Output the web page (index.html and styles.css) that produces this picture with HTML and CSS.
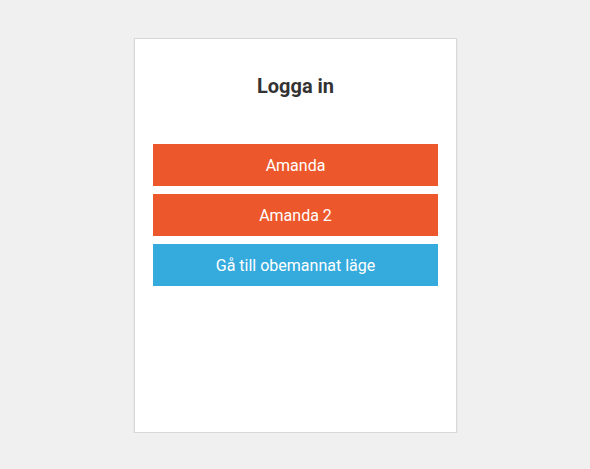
FILE: index.html
```html
<!DOCTYPE html>
<html lang="sv">
<head>
<meta charset="utf-8">
<title>Logga in</title>
<link rel="stylesheet" href="styles.css">
</head>
<body>
<main class="page">
  <section class="card">
    <h1 class="title">Logga in</h1>
    <div class="buttons">
      <button class="btn btn-user">Amanda</button>
      <button class="btn btn-user">Amanda 2</button>
      <button class="btn btn-unmanned">Gå till obemannat läge</button>
    </div>
  </section>
</main>
</body>
</html>
```
FILE: styles.css
```css
html, body {
  margin: 0;
  padding: 0;
  background: #f0f0f0;
  font-family: Roboto, "Liberation Sans", sans-serif;
}
.page {
  display: flex;
  justify-content: center;
  padding-top: 38px;
}
.card {
  box-sizing: border-box;
  width: 323px;
  height: 395px;
  background: #fff;
  border: 1px solid #d8d8d8;
  box-shadow: 0 1px 2px rgba(0,0,0,0.08);
  padding: 35px 18px 0 18px;
  margin-left: 1px;
}
.title {
  margin: 0;
  text-align: center;
  font-size: 20px;
  font-weight: 700;
  color: #333;
  line-height: 24px;
}
.buttons {
  display: flex;
  flex-direction: column;
  gap: 8px;
  margin-top: 46px;
}
.btn {
  height: 42px;
  border: none;
  margin: 0;
  font-family: Roboto, "Liberation Sans", sans-serif;
  font-size: 16px;
  color: #fff;
  cursor: pointer;
}
.btn-user {
  background: #ec582c;
}
.btn-unmanned {
  background: #35aadd;
}
```
